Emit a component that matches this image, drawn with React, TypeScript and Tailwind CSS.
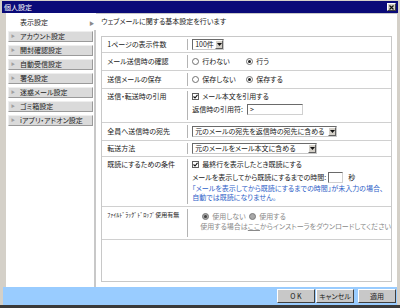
import React from 'react';

const navItems = [
  'アカウント設定',
  '開封確認設定',
  '自動受信設定',
  '署名設定',
  '迷惑メール設定',
  'ゴミ箱設定',
  'iアプリ・アドオン設定',
];

function Radio({ checked, disabled }: { checked?: boolean; disabled?: boolean }) {
  return (
    <span
      className={`inline-flex w-[7px] h-[7px] rounded-full border items-center justify-center shrink-0 ${
        disabled ? 'border-[#7a7a7a] bg-[#a8a8a8]' : 'border-[#707070] bg-white'
      }`}
    >
      {checked && <span className={`w-[3px] h-[3px] rounded-full ${disabled ? 'bg-[#404040]' : 'bg-[#222]'}`} />}
    </span>
  );
}

function Check() {
  return (
    <span className="inline-flex w-[7px] h-[7px] border border-[#606060] bg-white items-center justify-center shrink-0">
      <svg width="5" height="5" viewBox="0 0 5 5">
        <path d="M0.5 2.5 L2 4 L4.5 0.8" stroke="#111" strokeWidth="1.1" fill="none" />
      </svg>
    </span>
  );
}

function Select({ text, w }: { text: string; w: string }) {
  return (
    <div className={`flex h-[11px] border border-t-[#6a6a6a] border-l-[#6a6a6a] border-r-[#c8c8c8] border-b-[#c8c8c8] bg-white ${w}`}>
      <span className="flex-1 pl-[2px] leading-[9px] whitespace-nowrap">{text}</span>
      <span className="w-[8px] shrink-0 bg-[#d4d0c8] border border-t-white border-l-white border-r-[#606060] border-b-[#606060] flex items-center justify-center">
        <svg width="5" height="3" viewBox="0 0 5 3">
          <path d="M0 0 H5 L2.5 3 Z" fill="#111" />
        </svg>
      </span>
    </div>
  );
}

function Row({ label, h, top, small, children }: { label: string; h: string; top?: boolean; small?: boolean; children: React.ReactNode }) {
  return (
    <div className={`flex border-b border-[#d0d0d0] ${h}`}>
      <div className={`w-[85px] pl-[5px] flex ${top ? 'items-start pt-[3px]' : 'items-center'} whitespace-nowrap overflow-hidden`}>
        <span className={`leading-[9px] ${small ? 'text-[6px]' : ''}`}>{label}</span>
      </div>
      <div className={`flex-1 my-[2px] border-l border-[#b4b4b4] pl-[4px] flex ${top ? 'flex-col pt-[1px]' : 'items-center'}`}>
        {children}
      </div>
    </div>
  );
}

function Button({ label }: { label: string }) {
  return (
    <div className="w-[38px] h-[14px] bg-[#c8c8c8] border border-t-white border-l-white border-r-[#404040] border-b-[#404040] flex items-center justify-center leading-[9px]">
      {label}
    </div>
  );
}

export default function App() {
  return (
    <div className="w-[400px] h-[308px] bg-[#d4d0c8] flex flex-col text-[7px] text-[#1a1a1a] font-['Noto_Sans_CJK_JP','Noto_Sans',sans-serif] [font-feature-settings:'palt'] overflow-hidden">
      {/* title bar */}
      <div className="mt-[1px] mx-[2px] h-[12px] bg-[#0a0a78] flex items-center justify-between pl-[2px] pr-[2px]">
        <span className="text-white leading-[9px]">個人設定</span>
        <span className="w-[9px] h-[8px] bg-[#d4d0c8] border border-t-white border-l-white border-r-[#404040] border-b-[#404040] flex items-center justify-center">
          <svg width="5" height="5" viewBox="0 0 5 5">
            <path d="M0.5 0.5 L4.5 4.5 M4.5 0.5 L0.5 4.5" stroke="#111" strokeWidth="1.2" />
          </svg>
        </span>
      </div>

      {/* body */}
      <div className="flex-1 flex ml-[6px] mr-[3px] bg-white">
        {/* sidebar */}
        <div className="w-[94px] flex flex-col">
          <div className="h-[17px] pl-[2px] pt-[4px]">
            <div className="h-[11px] flex items-center pl-[12px] pr-[2px] justify-between">
              <span className="leading-[9px]">表示設定</span>
              <span className="text-[#8a8a8a] text-[5px] leading-[5px]">▶</span>
            </div>
          </div>
          <div className="flex-1 flex flex-col gap-[3px] pl-[2px] pt-[1px] border-r-2 border-[#c8c8c8]">
            {navItems.map((item) => (
              <div
                key={item}
                className="h-[11px] mr-[1px] bg-[#dadada] border border-t-[#eeeeee] border-l-[#eeeeee] border-r-[#9a9a9a] border-b-[#9a9a9a] flex items-center"
              >
                <span className="w-[11px] pl-[2px] text-[#a0a0a0] text-[4px] leading-[5px]">▶</span>
                <span className="leading-[9px] whitespace-nowrap">{item}</span>
              </div>
            ))}
          </div>
        </div>

        {/* main panel */}
        <div className="flex-1 flex flex-col border-t border-[#c8c8c8] px-[5px]">
          <div className="pt-[3px] h-[13px] leading-[9px] whitespace-nowrap">ウェブメールに関する基本設定を行います</div>
          <div className="mt-[9px] h-[246px] border border-[#c8c8c8] flex flex-col">
            <Row label="1ページの表示件数" h="h-[16px]">
              <Select text="100件" w="w-[32px]" />
            </Row>
            <Row label="メール送信時の確認" h="h-[18px]">
              <div className="flex items-center gap-[3px] w-[54px]">
                <Radio /> <span className="leading-[9px]">行わない</span>
              </div>
              <div className="flex items-center gap-[3px]">
                <Radio checked /> <span className="leading-[9px]">行う</span>
              </div>
            </Row>
            <Row label="送信メールの保存" h="h-[18px]">
              <div className="flex items-center gap-[3px] w-[54px]">
                <Radio /> <span className="leading-[9px] whitespace-nowrap">保存しない</span>
              </div>
              <div className="flex items-center gap-[3px]">
                <Radio checked /> <span className="leading-[9px]">保存する</span>
              </div>
            </Row>
            <Row label="送信・転送時の引用" h="h-[34px]" top>
              <div className="flex items-center gap-[3px] h-[9px]">
                <Check /> <span className="leading-[9px]">メール本文を引用する</span>
              </div>
              <div className="flex items-center mt-[3px] gap-[4px]">
                <span className="leading-[9px] whitespace-nowrap">返信時の引用符:</span>
                <div className="w-[56px] h-[11px] border border-t-[#6a6a6a] border-l-[#6a6a6a] border-r-[#d0d0d0] border-b-[#d0d0d0] pl-[2px] leading-[9px]">
                  &gt;
                </div>
              </div>
            </Row>
            <Row label="全員へ送信時の宛先" h="h-[18px]">
              <Select text="元のメールの宛先を返信時の宛先に含める" w="w-[145px]" />
            </Row>
            <Row label="転送方法" h="h-[16px]">
              <Select text="元のメールをメール本文に含める" w="w-[125px]" />
            </Row>
            <Row label="既読にするための条件" h="h-[50px]" top>
              <div className="flex items-center gap-[3px] h-[9px]">
                <Check /> <span className="leading-[9px]">最終行を表示したとき既読にする</span>
              </div>
              <div className="flex items-center mt-[3px] h-[11px]">
                <span className="leading-[9px] whitespace-nowrap">メールを表示してから既読にするまでの時間:</span>
                <div className="ml-[2px] w-[15px] h-[11px] border border-t-[#6a6a6a] border-l-[#6a6a6a] border-r-[#d0d0d0] border-b-[#d0d0d0]" />
                <span className="ml-[5px] leading-[9px]">秒</span>
              </div>
              <div className="mt-[1px] text-[#2f62c8] leading-[9px] whitespace-nowrap">
                「メールを表示してから既読にするまでの時間」が未入力の場合、
                <br />
                自動では既読になりません。
              </div>
            </Row>
            <Row label="ﾌｧｲﾙﾄﾞﾗｯｸﾞﾄﾞﾛｯﾌﾟ使用有無" h="h-[33px]" top small>
              <div className="flex items-center h-[9px] text-[#8a8a8a] mt-[2px] pl-[10px]">
                <div className="flex items-center gap-[3px] w-[47px]">
                  <Radio checked disabled /> <span className="leading-[9px]">使用しない</span>
                </div>
                <div className="flex items-center gap-[3px]">
                  <Radio disabled /> <span className="leading-[9px]">使用する</span>
                </div>
              </div>
              <div className="mt-[1px] pl-[8px] text-[#8a8a8a] leading-[9px] whitespace-nowrap">
                使用する場合は<span className="underline">ここ</span>からインストーラをダウンロードしてください
              </div>
            </Row>
          </div>
        </div>
      </div>

      {/* footer */}
      <div className="mx-[3px] h-[18px] bg-[#99ccff] flex items-center justify-end pr-[1px] gap-[1px]">
        <Button label="O K" />
        <Button label="キャンセル" />
        <div className="w-[2px]" />
        <Button label="適用" />
      </div>
      <div className="h-[3px] bg-[#3a3a3a]" />
    </div>
  );
}
